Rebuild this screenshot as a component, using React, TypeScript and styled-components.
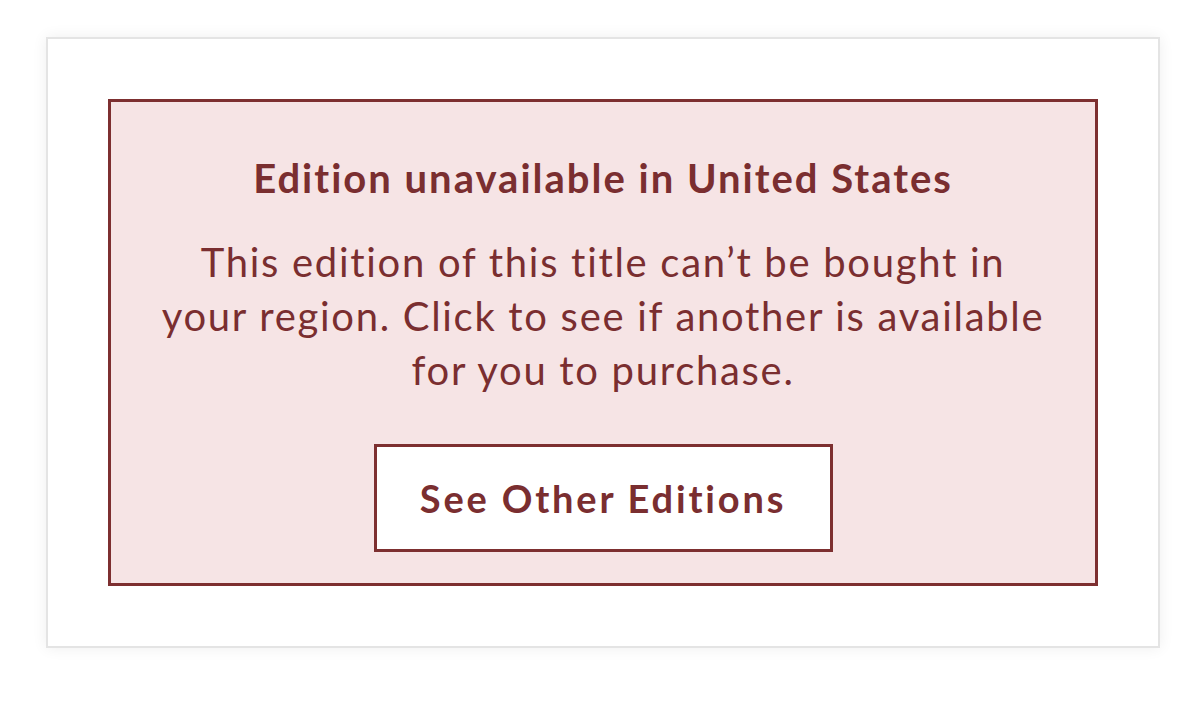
import styled, { createGlobalStyle } from "styled-components";

const GlobalStyle = createGlobalStyle`
  body {
    margin: 0;
    background: #fff;
    font-family: Lato, "Open Sans", sans-serif;
    font-variant-ligatures: none;
  }
`;

function App() {
  return (
    <>
      <GlobalStyle />
      <Page>
        <Card>
          <Notice>
            <Title>Edition unavailable in United States</Title>
            <Message>
              This edition of this title can’t be bought in your region. Click
              to see if another is available for you to purchase.
            </Message>
            <Button>See Other Editions</Button>
          </Notice>
        </Card>
      </Page>
    </>
  );
}

export default App;

const Page = styled.div`
  padding: 37px 34px 56px 46px;
`;

const Card = styled.div`
  width: 1114px;
  box-sizing: border-box;
  background: #fff;
  border: 2px solid #e4e4e4;
  box-shadow: 0 0 14px rgba(0, 0, 0, 0.07);
  padding: 60px;
`;

const Notice = styled.div`
  background: #f6e4e5;
  border: 3px solid #7d2f30;
  padding: 54px 40px 31px;
  display: flex;
  flex-direction: column;
  align-items: center;
  color: #7a2e30;
  text-align: center;
`;

const Title = styled.h2`
  margin: 0;
  font-size: 40px;
  line-height: 44px;
  font-weight: 700;
  letter-spacing: 2px;
`;

const Message = styled.p`
  margin: 35px 0 47px;
  max-width: 887px;
  font-size: 40px;
  line-height: 54px;
  font-weight: 400;
  letter-spacing: 1.7px;
`;

const Button = styled.button`
  width: 459px;
  height: 108px;
  background: #fff;
  border: 3px solid #7d2f30;
  color: #7a2e30;
  font-family: inherit;
  font-variant-ligatures: none;
  font-size: 38px;
  font-weight: 700;
  letter-spacing: 2.8px;
  cursor: pointer;
`;
